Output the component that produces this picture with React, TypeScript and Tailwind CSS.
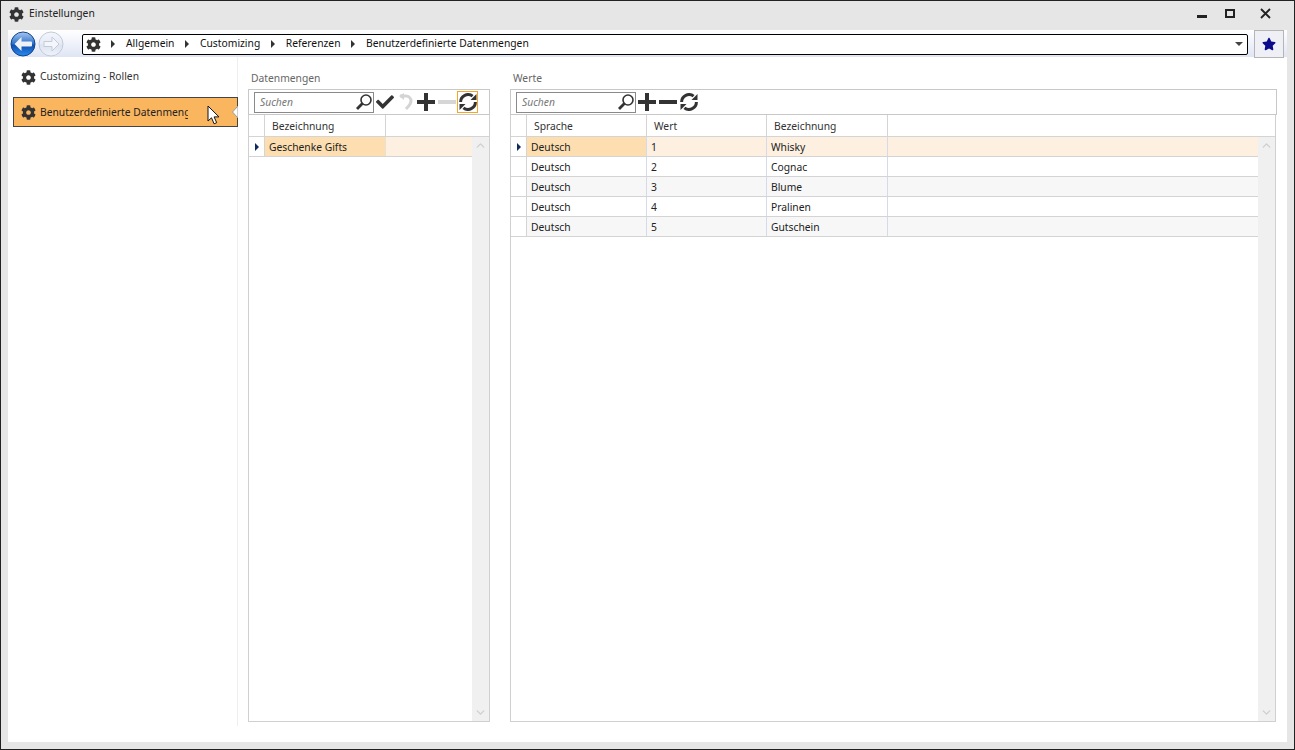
import { FaCheck, FaCog, FaStar } from 'react-icons/fa';
import { ChevronDown, ChevronUp } from 'lucide-react';

const font = { fontFamily: '"Noto Sans", sans-serif' };

function Crumb({ label }: { label: string }) {
  return (
    <div className="flex items-center">
      <span className="h-0 w-0 border-y-[4px] border-l-[4px] border-y-transparent border-l-[#333]" />
      <span className="ml-[11px] mr-[10.5px] text-[#111]">{label}</span>
    </div>
  );
}

function NavArrow({ active }: { active?: boolean }) {
  const id = active ? 'back' : 'fwd';
  return (
    <svg width="26" height="26" viewBox="0 0 26 26" className="shrink-0">
      <defs>
        <linearGradient id={id} x1="0" y1="0" x2="0" y2="1">
          <stop offset="0" stopColor={active ? '#a9c8ee' : '#f4f6fb'} />
          <stop offset="0.48" stopColor={active ? '#2f74cc' : '#e6ebf5'} />
          <stop offset="0.55" stopColor={active ? '#0f4fae' : '#dde4f1'} />
          <stop offset="1" stopColor={active ? '#2a8cf0' : '#eef2fa'} />
        </linearGradient>
      </defs>
      <circle cx="13" cy="13" r="12" fill={`url(#${id})`} stroke={active ? '#14428c' : '#c3cbd9'} />
      {active ? (
        <path d="M4.5 13L11.5 6v4.5h9.5a1 1 0 0 1 1 1v3a1 1 0 0 1-1 1h-9.5V20z" fill="#eef1f6" />
      ) : (
        <path d="M21 13l-7-7v4.5H6v5h8V20z" fill="#f4f6fb" stroke="#c3cbd9" />
      )}
    </svg>
  );
}

function SearchBox() {
  return (
    <div className="flex h-[21px] w-[120px] items-center justify-between border border-[#8a8a8a] bg-white pl-[5px]">
      <span className="pt-px text-[10.3px] italic text-[#777]">Suchen</span>
      <svg width="18" height="18" viewBox="0 0 18 18" fill="none" stroke="#333">
        <circle cx="11" cy="7" r="5" strokeWidth="1.6" />
        <path d="M7.4 10.6L2 16" strokeWidth="2.8" />
      </svg>
    </div>
  );
}

function UndoIcon() {
  return (
    <svg width="15" height="18" viewBox="0 0 15 18" fill="none" stroke="#d4d4d4" strokeWidth="3">
      <path d="M1 3h6a5 5 0 0 1 5 5c0 3-2 5-5 8" />
      <path d="M5 0v7L0 3z" fill="#d4d4d4" stroke="none" />
    </svg>
  );
}

function PlusIcon() {
  return (
    <svg width="18" height="18" viewBox="0 0 18 18" className="shrink-0" fill="#333">
      <path d="M7 0h4v7h7v4h-7v7H7v-7H0V7h7z" />
    </svg>
  );
}

function MinusIcon({ color }: { color: string }) {
  return (
    <svg width="18" height="18" viewBox="0 0 18 18" className="shrink-0" fill={color}>
      <path d="M0 7h18v4H0z" />
    </svg>
  );
}

function RefreshIcon() {
  return (
    <svg width="18" height="18" viewBox="0 0 18 18" className="shrink-0" fill="none" stroke="#333" strokeWidth="3">
      <path d="M1.6 9a7.4 7.4 0 0 1 12-5.8" />
      <path d="M17.5 1v6h-6z" fill="#333" stroke="none" />
      <path d="M16.4 9a7.4 7.4 0 0 1-12 5.8" />
      <path d="M0.5 17v-6h6z" fill="#333" stroke="none" />
    </svg>
  );
}

function Scrollbar() {
  return (
    <div className="flex w-[17px] shrink-0 flex-col items-center justify-between bg-[#f0f0f0] pb-[2px] pt-[2px]">
      <ChevronUp size={13} strokeWidth={2.5} className="text-[#cfcfcf]" />
      <ChevronDown size={13} strokeWidth={2.5} className="text-[#cfcfcf]" />
    </div>
  );
}

function RowMarker({ on }: { on?: boolean }) {
  return (
    <div className="flex w-4 shrink-0 items-center justify-center border-r border-[#d4d4d4] bg-white">
      {on && <span className="h-0 w-0 border-y-[4px] border-l-[4px] border-y-transparent border-l-[#12295e]" />}
    </div>
  );
}

const values = [
  ['Deutsch', '1', 'Whisky'],
  ['Deutsch', '2', 'Cognac'],
  ['Deutsch', '3', 'Blume'],
  ['Deutsch', '4', 'Pralinen'],
  ['Deutsch', '5', 'Gutschein'],
];

export default function App() {
  return (
    <div
      style={font}
      className="flex h-[750px] w-[1295px] flex-col overflow-hidden border border-[#222] bg-[#e6e6e6] text-[10.3px] text-[#222]"
    >
      {/* title bar */}
      <div className="flex h-[29px] shrink-0 items-center pb-[3px] pl-[8px] text-[#222]">
        <FaCog size={15} className="text-[#333]" />
        <span className="ml-[5px]">Einstellungen</span>
        <div className="ml-auto flex items-center">
          <span className="mt-[5px] h-[3px] w-[10px] bg-[#222]" />
          <span className="mb-[2px] ml-[18px] h-[9px] w-[10px] border-2 border-[#222]" />
          <svg width="11" height="11" viewBox="0 0 11 11" className="mb-[1px] ml-[25px] mr-[23px]" stroke="#222" strokeWidth="1.8">
            <path d="M1 1l9 9M10 1l-9 9" />
          </svg>
        </div>
      </div>

      <div className="mx-[7px] mb-[7px] flex min-h-0 flex-1 flex-col bg-white">
        {/* nav bar */}
        <div className="flex h-[27px] shrink-0 items-center bg-gradient-to-b from-white to-[#dfe5f5]">
          <div className="ml-[2px] mt-px flex items-center gap-[2px]">
            <NavArrow active />
            <NavArrow />
          </div>
          <div className="ml-[18px] mt-px flex h-[21px] flex-1 items-center rounded-[2px] border border-black bg-white pl-[3px]">
            <FaCog size={15} className="mr-[10px] text-[#333]" />
            <Crumb label="Allgemein" />
            <Crumb label="Customizing" />
            <Crumb label="Referenzen" />
            <Crumb label="Benutzerdefinierte Datenmengen" />
            <span className="ml-auto mr-[4px] h-0 w-0 border-x-[4px] border-t-[4px] border-x-transparent border-t-[#444]" />
          </div>
          <div className="ml-[6px] flex h-[28px] w-[30px] items-center justify-center border border-[#b5b5b5] bg-[#eef0f6]">
            <FaStar size={14} className="text-[#0a0a8c]" />
          </div>
          <div className="w-[3px]" />
        </div>

        <div className="flex min-h-0 flex-1">
          {/* sidebar */}
          <div className="relative mb-[16px] w-[230px] shrink-0 border-r border-[#efefef] pt-[10px]">
            <div className="flex h-[20px] items-center pl-[13px]">
              <FaCog size={15} className="text-[#333]" />
              <span className="ml-[4px] text-[#333]">Customizing - Rollen</span>
            </div>
            <div className="relative ml-[5px] mt-[10px] flex h-[30px] w-[225px] items-center border border-[#444] bg-[#fab55f] pl-[7px]">
              <FaCog size={15} className="shrink-0 text-[#333]" />
              <span className="ml-[4px] w-[148px] overflow-hidden whitespace-nowrap pt-[2px]">Benutzerdefinierte Datenmengen</span>
              <svg width="6" height="12" viewBox="0 0 6 12" className="absolute right-[-1px] top-[8px]">
                <path d="M6 0L0.5 6 6 12z" fill="#fff" stroke="#9a9a9a" strokeWidth="1" />
              </svg>
              <svg width="14" height="20" viewBox="0 0 14 20" className="absolute left-[193px] top-[7px]">
                <path d="M1 1v15l3.5-3.2 2.6 6 2.6-1.1-2.6-5.8H12z" fill="#fff" stroke="#111" strokeWidth="1" />
              </svg>
            </div>
          </div>

          {/* Datenmengen */}
          <div className="mb-[20px] ml-[10px] flex w-[242px] shrink-0 flex-col">
            <div className="h-[32px] pl-[3px] pt-[14px] leading-[14px] text-[#666]">Datenmengen</div>
            <div className="flex h-[26px] shrink-0 items-center border border-[#c8c8c8] pl-[5px]">
              <SearchBox />
              <div className="ml-[2px] flex items-center">
                <FaCheck size={18} className="text-[#333]" />
                <div className="ml-[5px]"><UndoIcon /></div>
                <div className="ml-[3px]"><PlusIcon /></div>
                <div className="ml-[3px]"><MinusIcon color="#d6d6d6" /></div>
                <div className="ml-[1px] flex h-[22px] w-[21px] items-center justify-center border border-[#f5a623]">
                  <RefreshIcon />
                </div>
              </div>
            </div>
            <div className="flex min-h-0 flex-1 flex-col border border-t-0 border-[#d0d0d0]">
              <div className="flex h-[22px] shrink-0 border-b border-[#d4d4d4] text-[#333]">
                <RowMarker />
                <div className="flex w-[121px] items-center border-r border-[#d4d4d4] pl-[7px] pt-[2px]">Bezeichnung</div>
              </div>
              <div className="flex min-h-0 flex-1">
                <div className="min-w-0 flex-1">
                  <div className="flex h-[20px] border-b border-[#d4d4d4] bg-[#fdf0e0]">
                    <RowMarker on />
                    <div className="flex w-[121px] items-center border-r border-[#e8e0d0] bg-[#fddeb0] pl-[4px] pt-[2px]">Geschenke Gifts</div>
                  </div>
                </div>
                <Scrollbar />
              </div>
            </div>
          </div>

          {/* Werte */}
          <div className="mb-[20px] ml-[20px] flex w-[767px] shrink-0 flex-col">
            <div className="h-[32px] pl-[3px] pt-[14px] leading-[14px] text-[#666]">Werte</div>
            <div className="flex h-[26px] shrink-0 items-center border border-[#c8c8c8] pl-[5px]">
              <SearchBox />
              <div className="ml-[2px] flex items-center">
                <PlusIcon />
                <div className="ml-[3px]"><MinusIcon color="#333" /></div>
                <div className="ml-[3px]"><RefreshIcon /></div>
              </div>
            </div>
            <div className="mr-[1px] flex min-h-0 flex-1 flex-col border border-t-0 border-[#d0d0d0]">
              <div className="flex h-[22px] shrink-0 border-b border-[#d4d4d4] text-[#333]">
                <RowMarker />
                <div className="flex w-[120px] items-center border-r border-[#d4d4d4] pl-[7px] pt-[2px]">Sprache</div>
                <div className="flex w-[120px] items-center border-r border-[#d4d4d4] pl-[7px] pt-[2px]">Wert</div>
                <div className="flex w-[121px] items-center border-r border-[#d4d4d4] pl-[7px] pt-[2px]">Bezeichnung</div>
              </div>
              <div className="flex min-h-0 flex-1">
                <div className="min-w-0 flex-1">
                  {values.map((row, i) => (
                    <div
                      key={row[1]}
                      className={`flex h-[20px] border-b border-[#d4d4d4] ${i === 0 ? 'bg-[#fdf0e0]' : i % 2 === 0 ? 'bg-[#f7f7f7]' : 'bg-white'}`}
                    >
                      <RowMarker on={i === 0} />
                      <div className={`flex w-[120px] items-center border-r border-[#d4dbe6] pl-[4px] pt-[2px] ${i === 0 ? 'bg-[#fddeb0]' : ''}`}>{row[0]}</div>
                      <div className="flex w-[120px] items-center border-r border-[#d4dbe6] pl-[4px] pt-[2px]">{row[1]}</div>
                      <div className="flex w-[121px] items-center border-r border-[#d4dbe6] pl-[4px] pt-[2px]">{row[2]}</div>
                    </div>
                  ))}
                </div>
                <Scrollbar />
              </div>
            </div>
          </div>
        </div>
      </div>
    </div>
  );
}
